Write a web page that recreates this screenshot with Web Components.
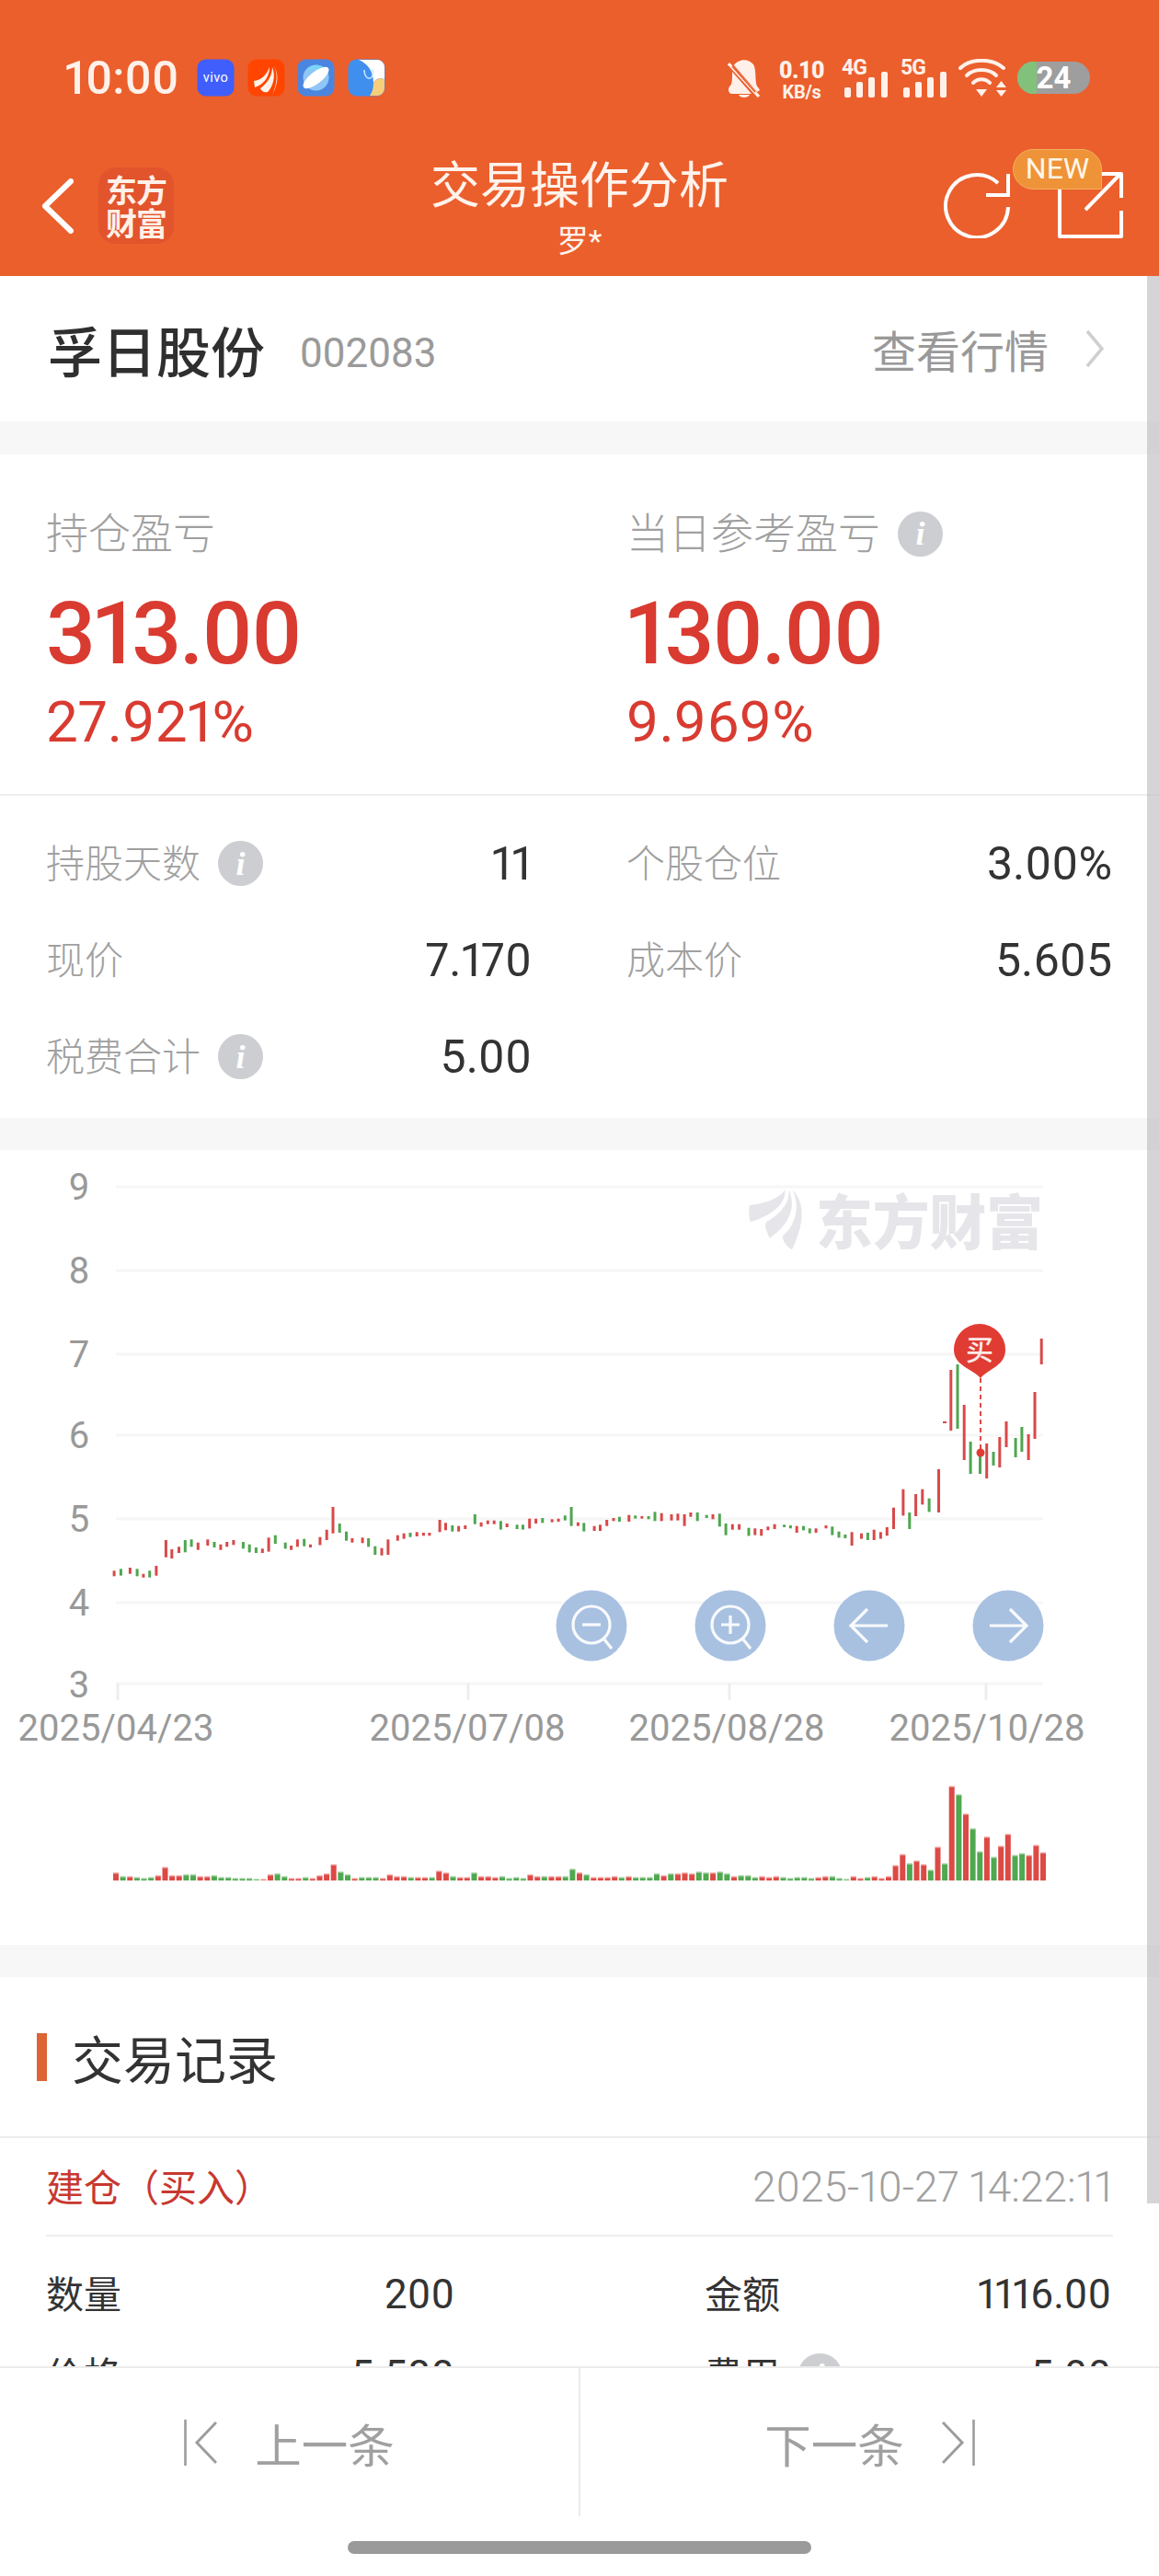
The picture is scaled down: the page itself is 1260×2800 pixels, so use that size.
<!DOCTYPE html>
<html lang="zh-CN"><head><meta charset="utf-8">
<style>
html,body{margin:0;padding:0;background:#fff}
body{font-family:Roboto,"Noto Sans CJK SC",sans-serif;width:1260px;height:2800px;overflow:hidden}
</style></head><body>
<trade-app></trade-app>
<script>
const FAN='M460 180C500 175 540 160 556 130C560 175 520 215 462 235C458 215 458 195 460 180ZM505 235C545 210 570 170 566 130C585 180 575 235 515 288C505 265 500 250 505 235ZM576 130C605 165 615 225 575 325C560 315 548 295 550 280C590 240 595 175 576 130Z';
function def(name,css,html,setup){
  customElements.define(name,class extends HTMLElement{
    constructor(){super();const r=this.attachShadow({mode:'open'});
      const h=typeof html==='function'?html(this):html;
      r.innerHTML='<style>'+css+'</style>'+h;
      if(setup)setup(this,r);}
  });
}
def('info-dot',`:host{display:inline-flex;width:49px;height:49px;border-radius:50%;background:#cdced2;color:#fff;align-items:center;justify-content:center;font:italic 700 36px/1 "Liberation Serif",serif;flex:none}`,'i');

def('status-bar',`
:host{display:flex;justify-content:space-between;padding:64px 75px 0 70px;height:42px;color:#fff1ea;font-family:Roboto,sans-serif}
.l,.r{display:flex;align-items:flex-start}
.time{font-size:50px;font-weight:500;line-height:42px;width:144px;font-variant-numeric:proportional-nums}
.ic{width:41px;height:41px;margin-right:13.5px;display:block}
.net{display:flex;flex-direction:column;align-items:center;width:49px;margin:0 20px;font-weight:700;line-height:1}
.net b{font-size:25px;height:26px;letter-spacing:-.5px}.net i{font-style:normal;font-size:20px;letter-spacing:-.3px}
svg{display:block}
.batt{margin-left:11px;margin-top:3px;width:79px;height:35px;border-radius:18px;overflow:hidden;background:#9e9e9e;position:relative;text-align:center;color:#fff;font:700 33px/35px Roboto,sans-serif}
.batt u{position:absolute;left:0;top:0;bottom:0;width:21px;background:#82c17b}
.batt span{position:relative}
`,`
<div class="l"><span class="time">10:00</span>
<svg class="ic" viewBox="0 0 41 41"><rect x=".5" y=".5" width="40" height="40" rx="9" fill="#3f5efb"/><text x="20.5" y="25" text-anchor="middle" font-size="14.500" fill="#fff" font-family="Roboto" letter-spacing=".5">vivo</text></svg>
<svg class="ic" viewBox="0 0 41 41"><rect x=".5" y=".5" width="40" height="40" rx="9" fill="#ff4500"/><path d="M7 24C14 23 20 19 24 9C24 19 18 28 8 31ZM14 32C22 26 27 18 27 9C31 18 28 30 22 36C18 37 15 35 14 32ZM29 8C33 16 33 27 26 41C31 32 36 20 29 8Z" fill="#fff3e8"/></svg>
<svg class="ic" viewBox="0 0 41 41"><rect x=".5" y=".5" width="40" height="40" rx="9" fill="#4a86e0"/><circle cx="20.5" cy="20.5" r="14" fill="#8fc6f5"/><path d="M10 12A14 14 0 0 1 31 11Z" fill="#79d4f6"/><ellipse cx="20.5" cy="20.5" rx="17" ry="6.5" transform="rotate(-38 20.5 20.5)" fill="#fff"/></svg>
<svg class="ic" viewBox="0 0 41 41"><rect x=".5" y=".5" width="40" height="40" rx="9" fill="#3f8fef"/><path d="M12 1H32A8 8 0 0 1 40 9V22C34 20 30 22 28 26C28 14 22 5 12 1Z" fill="#fff"/><path d="M28 26C30 22 35 20 40 22V32A8 8 0 0 1 32 40H24C27 36 28 31 28 26Z" fill="#f6ce7c"/><path d="M18 12C18 25 30 24 27 11" fill="none" stroke="#cde6fb" stroke-width="1.6"/></svg>
</div>
<div class="r">
<svg width="36" height="42" viewBox="0 0 36 42" fill="#fff1ea"><path d="M7 7C10 1 22 -2 28 6C31 11 30 20 31 26C31 30 34 31 35 34L32 36ZM2 30C5 28 5 24 5 14L26 38H5C1 38 0 33 2 30ZM12 39H24C22 43 14 43 12 39Z"/><path d="M1 5L34 41" stroke="#fff1ea" stroke-width="3.2"/><path d="M5 8L30 36" stroke="#eb5f2d" stroke-width="1.8"/></svg>
<div class="net"><b>0.10</b><i>KB/s</i></div>
<svg width="50" height="42" viewBox="0 0 50 42" style="margin-left:2px;margin-right:14px;overflow:visible"><text x="-3" y="17" font-family="Roboto" font-weight="700" font-size="23" fill="#fff1ea" letter-spacing="-1">4G</text><g fill="#fff1ea"><rect x="0" y="31" width="7" height="11" rx="2"/><rect x="13" y="25" width="7" height="17" rx="2"/><rect x="26" y="20" width="7" height="22" rx="2"/><rect x="40" y="14" width="7" height="28" rx="2"/></g></svg>
<svg width="50" height="42" viewBox="0 0 50 42" style="margin-right:10px;overflow:visible"><text x="-3" y="17" font-family="Roboto" font-weight="700" font-size="23" fill="#fff1ea" letter-spacing="-1">5G</text><g fill="#fff1ea"><rect x="0" y="31" width="7" height="11" rx="2"/><rect x="13" y="25" width="7" height="17" rx="2"/><rect x="26" y="20" width="7" height="22" rx="2"/><rect x="40" y="14" width="7" height="28" rx="2"/></g></svg>
<svg width="53" height="42" viewBox="0 0 53 42" fill="none" stroke="#fff1ea" stroke-width="4" stroke-linecap="round"><path d="M2 10C13 -1 37 -1 49 10"/><path d="M9 18C17 10 33 10 41 18"/><path d="M16 26C21 21 29 21 34 26"/><path d="M19 33H31L25 41Z" fill="#fff1ea" stroke="none"/><path d="M41 31H52L46.500 24ZM41 34H52L46.500 41Z" fill="#fff1ea" stroke="none"/></svg>
<div class="batt"><u></u><span>24</span></div>
</div>`);

def('nav-header',`
:host{display:grid;grid-template-columns:1fr auto 1fr;height:138px;margin-top:56px;color:#fff3ec;position:relative;font-family:Roboto,"Noto Sans CJK SC",sans-serif}
.left{display:flex;align-items:center;align-self:start;margin-top:20px;padding-left:45px;gap:27px}
.logo{width:82px;height:83px;box-sizing:border-box;padding-top:6px;border-radius:19px;background:#e2542c;font:700 34px/36px "Noto Sans CJK SC",sans-serif;text-align:center;letter-spacing:-1px;color:#fff0e8}
.mid{padding-top:11px;text-align:center;line-height:60px}
.t{font-size:54px}.s{font-size:34px;margin-top:-1px}
.right{display:flex;justify-content:flex-end;align-self:start;margin-top:25px;padding-right:38px;gap:52px}
svg{display:block}
.new{position:absolute;right:62px;top:0;width:97px;height:44px;box-sizing:border-box;border:1.5px solid #f4ad5f;border-radius:22px 22px 0 22px;background:#ee9338;color:#fff6e6;font:400 32px/41px Roboto,sans-serif;text-align:center}
`,`
<div class="left"><svg width="35" height="60" viewBox="0 0 35 60" fill="none" stroke="#fff" stroke-width="6" stroke-linecap="round" stroke-linejoin="round"><path d="M32 3L4 30L32 57"/></svg><div class="logo">东方<br>财富</div></div>
<div class="mid"><div class="t">交易操作分析</div><div class="s">罗*</div></div>
<div class="right">
<svg width="72" height="72" viewBox="0 0 72 72" fill="none" stroke="#fff" stroke-width="4"><path d="M70 38A34 34 0 1 1 59 12"/><path d="M46 25H70V2"/></svg>
<svg width="72" height="72" viewBox="0 0 72 72" fill="none" stroke="#fff" stroke-width="4" stroke-linejoin="round"><path d="M2 2H26M2 2V70H69V42"/><path d="M30 41L68 2M46 2H69V28"/></svg>
</div>
<div class="new">NEW</div>`);

def('stock-head',`
:host{display:flex;align-items:center;height:158px;padding:0 60px 0 52px;background:#fff;font-family:Roboto,"Noto Sans CJK SC",sans-serif}
.n{font-size:59px;font-weight:500;color:#2f2f2f}
.c{font-size:44px;color:#9a9a9a;margin-left:38px;padding-top:9px}
.m{margin-left:auto;font-size:48px;color:#999}
svg{margin-left:40px;display:block}
`,`<span class="n">孚日股份</span><span class="c">002083</span><span class="m">查看行情</span>
<svg width="20" height="42" viewBox="0 0 20 42" fill="none" stroke="#cfcfcf" stroke-width="3.500"><path d="M2 2L18 21L2 40"/></svg>`);

def('profit-item',`
:host{display:block;font-variant-numeric:proportional-nums}
.l{display:flex;align-items:center;gap:19px;font-size:46px;line-height:60px;color:#a0a0a0;font-weight:300}
.b{font-size:95px;line-height:100px;margin-top:29px;color:#d93b31;font-weight:500;letter-spacing:-2.2px}
.p{font-size:62px;line-height:60px;margin-top:16px;color:#d93b31}
`,el=>`<div class="l"><span>${el.getAttribute('label')}</span><slot></slot></div><div class="b">${el.getAttribute('big')}</div><div class="p">${el.getAttribute('pct')}</div>`);

def('profit-panel',`
:host{display:grid;grid-template-columns:631px 1fr;box-sizing:border-box;height:371px;padding:56px 0 0 50px;background:#fff;margin-top:36px;border-bottom:2px solid #eeeeee}
`,'<slot></slot>');

def('stat-item',`
:host{display:flex;align-items:center;height:105px}
.l{font-size:42px;color:#a0a0a0;font-weight:300;display:flex;align-items:center;gap:19px}
.l span{padding-bottom:6px}
.v{margin-left:auto;font-size:50px;color:#333;font-variant-numeric:proportional-nums}
`,el=>`<div class="l"><span>${el.getAttribute('label')}</span><slot></slot></div><div class="v">${el.getAttribute('value')}</div>`);

def('stat-grid',`
:host{display:grid;grid-template-columns:528px 528px;column-gap:103px;padding:21px 0 14px 50px;background:#fff}
`,'<slot></slot>');

def('kline-chart',`
:host{display:block;height:864px;margin-top:35px;background:#fff}
svg{display:block}
text{font-family:Roboto,sans-serif;fill:#999}
`,()=>{
 const c=[[309,322,340,'r'],[327,316,338,'g'],[352,312,332,'r'],[371,316,340,'g'],[388,332,344,'r'],[405,322,344,'g'],[423,306,338,'r'],[449,222,278,'r'],[465,252,282,'r'],[484,244,264,'r'],[501,222,262,'g'],[518,220,244,'g'],[536,230,254,'r'],[562,220,240,'r'],[580,228,246,'g'],[597,236,254,'r'],[614,228,244,'r'],[632,222,238,'r'],[658,228,250,'g'],[675,236,262,'g'],[693,246,264,'g'],[710,250,264,'r'],[727,214,260,'r'],[745,206,234,'g'],[772,230,250,'g'],[788,240,254,'r'],[805,220,244,'r'],[823,218,242,'g'],[840,236,246,'r'],[866,212,238,'r'],[884,188,222,'r'],[901,114,200,'r'],[919,168,198,'g'],[937,194,224,'g'],[953,216,230,'r'],[981,214,232,'r'],[997,216,244,'g'],[1015,242,270,'g'],[1033,248,272,'r'],[1050,220,270,'r'],[1076,206,224,'r'],[1093,200,218,'r'],[1110,198,212,'g'],[1128,196,210,'r'],[1146,198,208,'r'],[1162,198,208,'r'],[1190,156,196,'r'],[1206,166,190,'r'],[1224,174,194,'g'],[1241,176,194,'r'],[1259,174,186,'r'],[1285,138,170,'g'],[1302,164,178,'r'],[1320,158,170,'r'],[1337,158,170,'r'],[1355,160,188,'g'],[1372,168,180,'r'],[1399,172,186,'g'],[1415,172,188,'g'],[1433,152,184,'r'],[1450,152,168,'r'],[1468,150,166,'g'],[1494,154,164,'r'],[1511,152,162,'r'],[1529,142,158,'g'],[1546,114,176,'g']];
 const d=[[-4,164,176,'r'],[12,166,194,'g'],[40,176,192,'r'],[56,172,192,'r'],[74,156,176,'r'],[92,150,160,'r'],[108,146,162,'g'],[134,140,162,'r'],[151,142,152,'g'],[169,144,152,'r'],[187,144,154,'g'],[204,130,160,'g'],[222,134,160,'r'],[249,138,158,'r'],[266,136,158,'r'],[284,138,176,'r'],[301,132,146,'r'],[319,132,160,'g'],[344,140,150,'g'],[361,138,154,'r'],[379,136,178,'g'],[396,168,206,'g'],[414,170,188,'r'],[432,170,188,'r'],[458,182,208,'g'],[475,184,206,'r'],[492,186,208,'r'],[510,178,190,'r'],[528,170,186,'r'],[554,172,180,'g'],[571,174,184,'g'],[588,176,198,'r'],[606,176,190,'g'],[623,184,200,'g'],[640,184,198,'r'],[667,174,184,'r'],[684,178,206,'g'],[702,194,214,'g'],[719,204,216,'g'],[737,196,240,'r'],[763,200,218,'r'],[780,198,222,'g'],[797,188,222,'r'],[815,196,218,'r'],[832,180,208,'r'],[850,116,186,'r'],[876,56,142,'r'],[893,132,186,'g'],[910,72,144,'r'],[928,56,106,'r'],[946,86,130,'g']];
 const e=[[972,1597,1644,'r'],[1005,1489,1555,'r'],[1023,1483,1553,'g'],[1041,1527,1587,'r'],[1058,1567,1602,'g'],[1084,1580,1602,'g'],[1102,1569,1607,'r'],[1120,1578,1593,'g'],[1137,1562,1595,'r'],[1155,1545,1573,'r'],[1180,1563,1584,'g'],[1197,1551,1578,'g'],[1215,1559,1587,'r'],[1232,1513,1564,'r'],[1250,1455,1483,'r']];
 const R='#d8494a',G='#4fa650';
 let s='';
 const cd=(x,a,b,k)=>`<rect x="${x.toFixed(1)}" y="${a.toFixed(1)}" width="3" height="${(b-a).toFixed(1)}" fill="${k=='r'?R:G}"/>`;
 c.forEach(i=>s+=cd(i[0]/2.489-1.5,1600+i[1]/3,1600+i[2]/3,i[3]));
 d.forEach(i=>s+=cd(630+i[0]/2.489-1.5,1600+i[1]/3,1600+i[2]/3,i[3]));
 e.forEach(i=>s+=cd(630+i[0]/2.489-1.5,i[1],i[2],i[3]));
 s+=`<rect x="1025" y="1545" width="4" height="2" fill="${R}"/>`;
 const v='r8 g4 r4 g3 g2 g3 r5 r14 r5 r5 g6 g6 r4 r4 g5 g3 g3 g2 g2 g2 g1 r1 r6 g7 g4 r2 r2 g3 r2 r5 r7 r17 g9 g6 r2 g3 g3 g3 r2 r6 r4 r4 g3 r3 r3 g3 r10 r8 g4 r3 r3 g8 r4 r4 r3 g4 g2 g3 g2 r6 r4 g4 r4 r4 g4 g12 r8 g6 r3 r3 r3 r4 g3 r4 g3 g3 g3 g7 r5 g7 r7 r8 r7 g9 g8 r8 g9 g7 r4 g5 g5 g3 r4 r3 r4 g3 g2 g3 g3 g2 r3 r4 g4 g2 g1 r4 r2 g3 r4 r2 r4 r16 r28 g18 r21 r17 g11 r36 g18 r102 g93 r72 g56 g31 r47 g25 r37 r50 g27 g29 r27 r38 r30'.split(' ');
 let vs='';
 v.forEach((t,i)=>{const k=t[0],h=+t.slice(1),x=123+i*(1014-6)/(v.length-1);
  vs+=`<rect x="${x.toFixed(1)}" y="${2044-h}" width="6" height="${h}" fill="${k=='r'?'#dc4a46':'#50a850'}"/><rect x="${x.toFixed(1)}" y="${2043-h}" width="6" height="1.500" fill="${k=='r'?'#f7c4c2':'#bfe0bf'}"/>`;});
 const ys=[[9,1290],[8,1381],[7,1472],[6,1560],[5,1651],[4,1742],[3,1830]];
 let g='';
 ys.forEach(([n,y])=>{g+=`<rect x="126" y="${y-1.5}" width="1008" height="3" fill="#f6f6f6"/><text x="86" y="${y+(n==3?15:14)}" text-anchor="middle" font-size="40">${n}</text>`;});
 const dl=[[128,'2025/04/23',126],[509,'2025/07/08',508],[793,'2025/08/28',790],[1072,'2025/10/28',1073]];
 dl.forEach(([x,t,c])=>{g+=`<rect x="${x-1.5}" y="1830" width="3" height="18" fill="#eeeeee"/><text x="${c}" y="1892" text-anchor="middle" font-size="40">${t}</text>`;});
 const btn=(cx,inner)=>`<circle cx="${cx}" cy="1767" r="38.500" fill="#a9c1e1"/><g transform="translate(${cx} 1767)" fill="none" stroke="#fff" stroke-width="3.200" stroke-opacity=".92">${inner}</g>`;
 const mag='<circle cx="0" cy="-1" r="20"/><path d="M14 15L22 25"/>';
 const b=btn(643,mag+'<path d="M-10 -1H10"/>')+btn(794,mag+'<path d="M-10 -1H10M0 -11V9"/>')+btn(945,'<path d="M-20 0H20M-2 -18L-20 0L-2 18"/>')+btn(1096,'<path d="M-20 0H20M2 -18L20 0L2 18"/>');
 const wm=`<path d="${FAN}" transform="translate(630 1250) scale(.4018 .3333)" fill="#e6e6ea"/><text x="887" y="1352" font-size="64" style="fill:#e6e6ea;font-family:'Noto Sans CJK SC',sans-serif;font-weight:900" textLength="247" lengthAdjust="spacingAndGlyphs">东方财富</text>`;
 const mk=`<path d="M1066 1498C1058 1488 1037 1485 1037 1467A28 28 0 0 1 1093 1467C1093 1485 1074 1488 1066 1498Z" fill="#e03c33"/><text x="1065" y="1478" text-anchor="middle" font-size="30" style="fill:#fbe9e6;font-weight:500;font-family:'Noto Sans CJK SC',sans-serif">买</text><path d="M1066 1498V1578" stroke="#e0494a" stroke-width="2" stroke-dasharray="5 4"/><circle cx="1066" cy="1579" r="4.500" fill="#e03c33"/>`;
 return `<svg width="1260" height="864" viewBox="0 1250 1260 864">${g}${wm}${s}${vs}${b}${mk}</svg>`;
});

def('section-title',`
:host{display:flex;align-items:center;height:173px;gap:27px;padding-left:40px;background:#fff;margin-top:35px;border-bottom:2px solid #eeeeee;font-size:56px;color:#333}
i{width:11px;height:52px;background:#dc6435;display:block}
`,'<i></i><span><slot></slot></span>');

def('record-head',`
:host{display:flex;align-items:center;justify-content:space-between;height:105px;margin:0 50px;border-bottom:2px solid #eeeeee;background:#fff}
.a{font-size:41px;color:#c8382f;padding-bottom:4px}
.b{font-size:46px;color:#a0a0a0;font-weight:300;font-variant-numeric:proportional-nums}
`,el=>`<span class="a">${el.getAttribute('kind')}</span><span class="b">${el.getAttribute('time')}</span>`);

def('record-grid',`
:host{display:grid;grid-template-columns:444px 442px;column-gap:272px;padding:19px 0 0 50px;background:#fff}
`,'<slot></slot>');
def('record-item',`
:host{display:flex;align-items:center;height:88px;color:#333}
.l{font-size:41px;display:flex;align-items:center;gap:19px}
.l span{padding-bottom:6px}
.v{margin-left:auto;font-size:44px;font-variant-numeric:proportional-nums}
`,el=>`<div class="l"><span>${el.getAttribute('label')}</span><slot></slot></div><div class="v">${el.getAttribute('value')}</div>`);

def('pager-bar',`
:host{display:block;height:228px;background:#fff;border-top:2px solid #ececec;box-sizing:border-box;position:relative;z-index:3}
.row{display:flex;height:161px}
.btn{flex:1;display:flex;align-items:center;justify-content:center;gap:41px;color:#a0a0a0;font-size:50.500px}
.btn+.btn{border-left:2px solid #ececec}
svg{display:block}
.home{width:504px;height:14px;border-radius:7px;background:#9a9a9a;margin:27px auto 0}
`,`<div class="row">
<div class="btn"><svg width="36" height="50" viewBox="0 0 36 50" fill="none" stroke="#9c9c9c" stroke-width="2.600"><path d="M1.500 0V50"/><path d="M35 3L14 25L35 47" stroke-width="3"/></svg><span>上一条</span></div>
<div class="btn"><span>下一条</span><svg width="36" height="50" viewBox="0 0 36 50" fill="none" stroke="#9c9c9c" stroke-width="2.600"><path d="M34.500 0V50"/><path d="M1 3L22 25L1 47" stroke-width="3"/></svg></div>
</div><div class="home"></div>`);

def('trade-app',`
:host{display:flex;flex-direction:column;width:1260px;height:2800px;position:relative;overflow:hidden;background:#f7f7f7;font-family:Roboto,"Noto Sans CJK SC",sans-serif}
.head{background:#eb5f2d;height:300px;flex:none}
.scroll{flex:1;min-height:0;overflow:hidden;background:#f7f7f7}
.bar{position:absolute;right:0;top:300px;width:13px;height:2095px;background:rgba(190,191,195,.65);z-index:2}
`,`
<div class="head"><status-bar></status-bar><nav-header></nav-header></div>
<div class="scroll">
<stock-head></stock-head>
<profit-panel>
<profit-item label="持仓盈亏" big="313.00" pct="27.921%"></profit-item>
<profit-item label="当日参考盈亏" big="130.00" pct="9.969%"><info-dot></info-dot></profit-item>
</profit-panel>
<stat-grid>
<stat-item label="持股天数" value="11"><info-dot></info-dot></stat-item>
<stat-item label="个股仓位" value="3.00%"></stat-item>
<stat-item label="现价" value="7.170"></stat-item>
<stat-item label="成本价" value="5.605"></stat-item>
<stat-item label="税费合计" value="5.00"><info-dot></info-dot></stat-item>
</stat-grid>
<kline-chart></kline-chart>
<section-title>交易记录</section-title>
<div style="background:#fff">
<record-head kind="建仓（买入）" time="2025-10-27 14:22:11"></record-head>
<record-grid>
<record-item label="数量" value="200"></record-item>
<record-item label="金额" value="1116.00"></record-item>
<record-item label="价格" value="5.580"></record-item>
<record-item label="费用" value="5.00"><info-dot></info-dot></record-item>
</record-grid>
</div>
</div>
<pager-bar></pager-bar>
<div class="bar"></div>`);
</script></body></html>
